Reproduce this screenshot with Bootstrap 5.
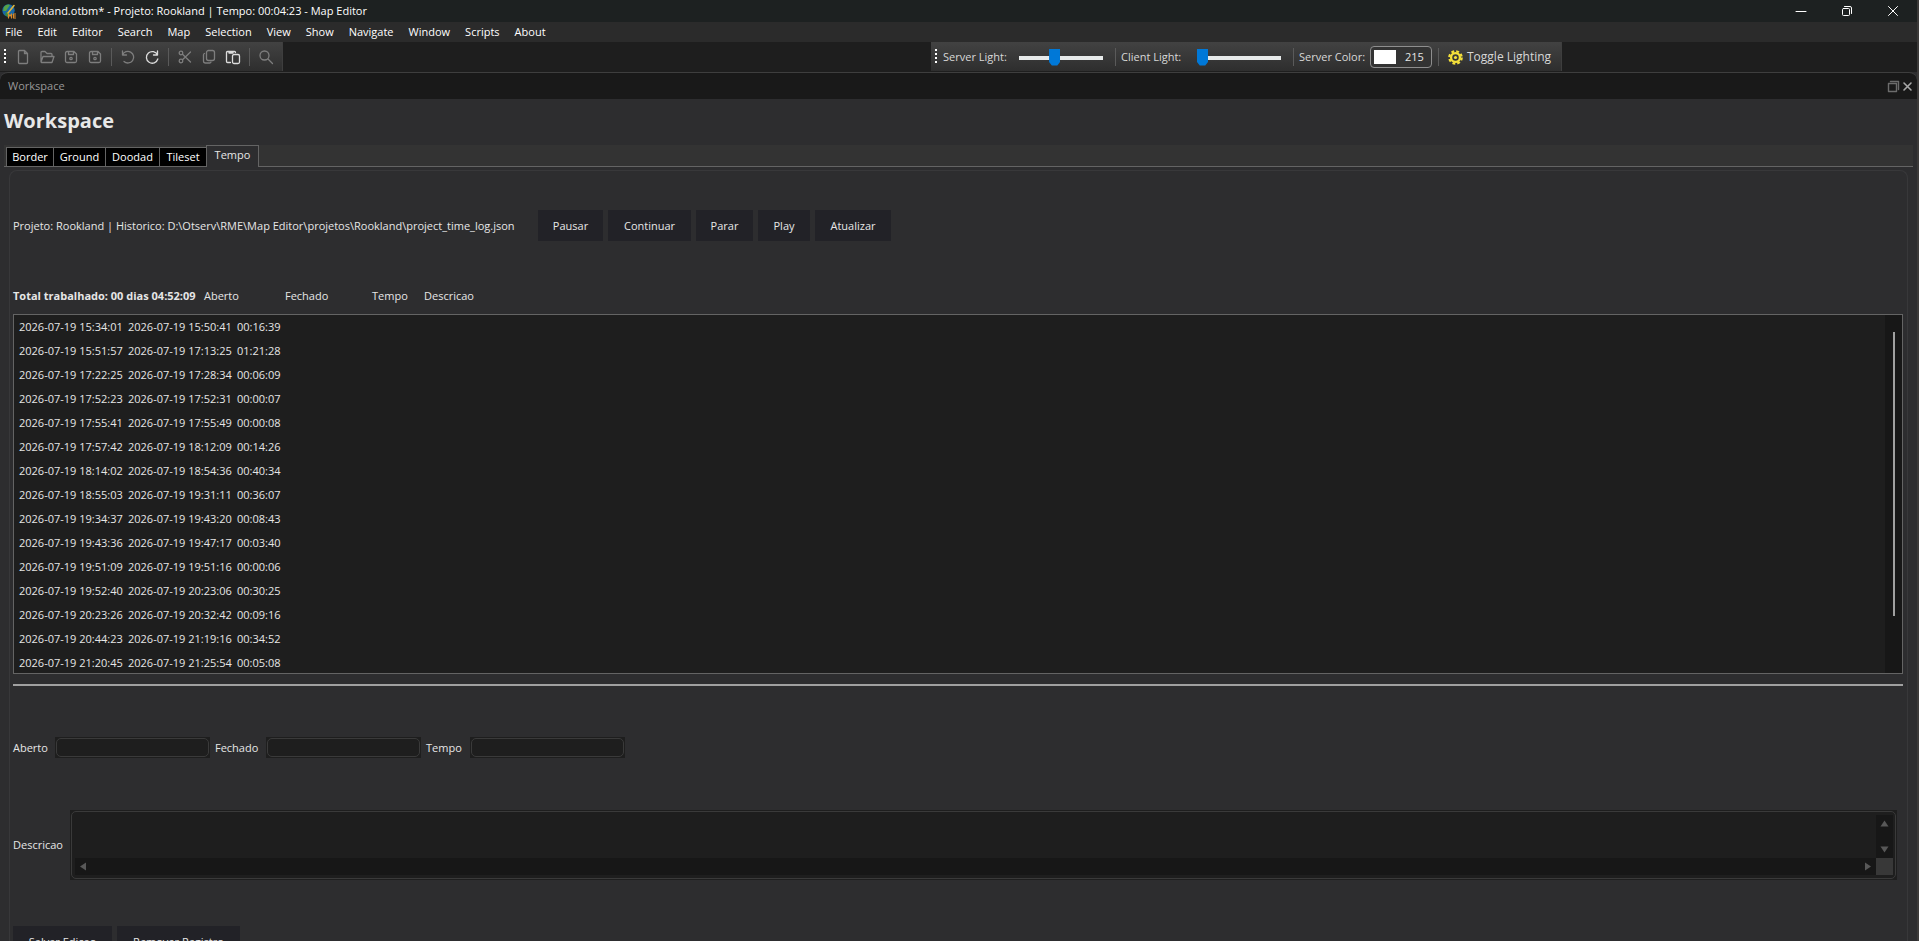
<!DOCTYPE html>
<html lang="pt" data-bs-theme="dark">
<head>
<meta charset="utf-8">
<meta name="viewport" content="width=device-width, initial-scale=1">
<title>rookland.otbm* - Map Editor</title>
<link href="https://cdn.jsdelivr.net/npm/bootstrap@5.3.0/dist/css/bootstrap.min.css" rel="stylesheet">
<script src="https://cdn.jsdelivr.net/npm/bootstrap@5.3.0/dist/js/bootstrap.bundle.min.js" defer></script>
<style>
  body { font-family: "Open Sans", "Liberation Sans", sans-serif; font-size: 11px; line-height: 16px; color: #e6e6e6; background: #2d2d2f; overflow: hidden; }
  svg { display: block; flex: none; fill: none; stroke-linecap: round; stroke-linejoin: round; }
  button { font: inherit; color: inherit; background: none; border: 0; padding: 0; }
  .window { border-right: 2px solid #3c3a39; overflow: hidden; }
  .titlebar { height: 22px; background: #1d2121; color: #fff; padding-left: 2px; padding-right: 18px; }
  .app-name { gap: 6px; }
  .titlebar .caption-buttons { gap: 34px; }
  .menubar { height: 20px; background: #2b2b2b; padding-left: 5px; gap: 15px; }
  .menubar a { color: #fff; text-decoration: none; }
  .toolrow { height: 30px; background: #1e1e1e; }
  .toolbox { height: 29px; background: linear-gradient(#424242, #2e2e2e); border-right: 1px solid #3e3e3e; }
  .grip { width: 2px; height: 15px; background: repeating-linear-gradient(#fff 0 2px, transparent 2px 4px); margin-left: 4px; flex: none; }
  .vsep { width: 1px; height: 18px; background: #5a5a5a; flex: none; }
  .icon-group { padding: 0 8px; gap: 8px; }
  .grip + .icon-group { padding-left: 9px; }
  .icon-group svg { width: 16px; height: 16px; stroke: #7e7e7e; stroke-width: 1.3; }
  .icon-group .live svg { stroke: #dcdcdc; }
  .lights { margin-left: 648px; }
  .lights label { color: #d8d8d8; white-space: nowrap; flex: none; }
  .light-label { width: 76px; margin-left: 5px; }
  .grip + .light-label { margin-left: 6px; }
  .color-label { width: 71px; margin-left: 5px; }
  .slider { appearance: none; -webkit-appearance: none; width: 84px; height: 19px; background: transparent; margin: 2px 12px 0 0; padding: 0; }
  .slider::-webkit-slider-runnable-track { height: 4px; background: #e7eaea; }
  .slider::-webkit-slider-thumb { -webkit-appearance: none; width: 11px; height: 17px; margin-top: -7px; background: #0078d7; border: 0; clip-path: polygon(0 0, 100% 0, 100% 80%, 75% 100%, 25% 100%, 0 80%); }
  .color-pick { width: 62px; height: 22px; border: 1px solid #8e8e8e; border-radius: 4px; background: #333; padding-left: 3px; gap: 9px; margin-right: 6px; }
  .swatch { width: 22px; height: 14px; background: #fff; }
  .toggle-light { font-size: 12px; gap: 4px; padding: 1px 10px 0 9px; color: #d8d8d8; }
  .dock-caption { height: 27px; background: #191919; border-top: 1px solid #3e3e3e; border-radius: 8px 8px 0 0; color: #989898; padding: 0 4px 0 8px; }
  .dock-buttons { gap: 2px; }
  .heading { font-size: 20px; line-height: 26px; font-weight: 700; margin: 9px 4px 11px; color: #e8e8e8; }
  .tabstrip { margin: 0 4px; height: 22px; background: #333; border-bottom: 1px solid #646464; padding-left: 2px; }
  .tabstrip button { background: #000; color: #fff; border: 1px solid #646464; border-bottom: 0; height: 19px; margin-right: -1px; line-height: 18px; }
  .tabstrip .current { background: #2d2d2f; color: #e6e6e6; height: 22px; margin-bottom: -1px; width: 53px; padding-bottom: 4px; }
  .panel { margin: 3px 9px 0; border: 1px solid #38383a; border-bottom: 0; border-radius: 8px 8px 0 0; padding: 39px 4px 0 3px; }
  .flat-btn { background: #222227; height: 31px; color: #e6e6e6; }
  .path-text { width: 520px; white-space: nowrap; }
  .actions { gap: 5px; margin-left: 5px; }
  .log-head { margin-top: 47px; height: 16px; }
  .log-box { margin-top: 10px; border: 1px solid #646464; background: #1e1e1e; height: 360px; overflow: hidden; }
  .log-table { margin-left: 5px; }
  .log-table td { height: 24px; padding: 0; white-space: nowrap; }
  .log-scroll { width: 17px; background: #171717; padding: 17px 7px 0 8px; }
  .log-scroll div { height: 284px; background: #a0a0a0; }
  .rule { height: 2px; background: #a0a0a0; margin-top: 10px; }
  .fields { margin-top: 51px; }
  .well { background: #1e1e1e; padding: 1px; }
  .well .inner { border: 1px solid #3a3a3a; border-radius: 5px; background: #1e1e1e; color: #e6e6e6; outline: 0; }
  .fields input { width: 153px; height: 19px; display: block; padding: 0 4px; }
  .fields .well + label { margin-left: 5px; }
  .desc { margin-top: 52px; margin-right: 6px; }
  .desc-label { width: 57px; }
  .desc-grid { display: grid; grid-template-columns: 1fr 17px; grid-template-rows: 43px 17px; padding: 3px 2px 3px 3px; }
  .desc-grid textarea { background: transparent; border: 0; resize: none; color: inherit; overflow: hidden; outline: 0; padding: 0; width: 100%; height: 43px; }
  .bar { background: #171717; }
  .bar svg { fill: #585858; }
  .corner { background: #383838; }
  .record-actions { gap: 5px; margin-top: 46px; }
</style>
</head>
<body>
<div class="window vh-100 d-flex flex-column">
  <header class="titlebar d-flex align-items-center justify-content-between flex-shrink-0">
    <div class="app-name d-flex align-items-center">
      <svg width="14" height="16" viewBox="0 0 14 16"><circle cx="6.500" cy="7.500" r="6.200" fill="#1769a8"/><path d="M2 4c2-3 5-3 6-2L6 5 4 8 1 8z" fill="#57a345"/><path d="M4 9l3 1-1 4-3-2z" fill="#3e8a3c"/><path d="M6 10L12 2.500" stroke="#e0b33a" stroke-width="1.600"/><path d="M6.500 15v-4l1.500 2 1.500-2v4M13.500 11h-2v4h2M11.500 13h2" stroke="#d98b2b" stroke-width="1.200"/></svg>
      <span>rookland.otbm* - Projeto: Rookland | Tempo: 00:04:23 - Map Editor</span>
    </div>
    <div class="caption-buttons d-flex align-items-center">
      <button aria-label="Minimize"><svg width="12" height="12" viewBox="0 0 12 12" stroke="#fff"><path d="M1 6.500h10"/></svg></button>
      <button aria-label="Restore"><svg width="12" height="12" viewBox="0 0 12 12" stroke="#fff"><rect x="1.500" y="3.500" width="7" height="7" rx="1"/><path d="M3.500 1.500h5.500a1.500 1.500 0 0 1 1.500 1.500v5.500"/></svg></button>
      <button aria-label="Close"><svg width="12" height="12" viewBox="0 0 12 12" stroke="#fff"><path d="M1.500 1.500l9 9M10.500 1.500l-9 9"/></svg></button>
    </div>
  </header>
  <nav class="menubar d-flex align-items-center flex-shrink-0">
    <a href="#">File</a><a href="#">Edit</a><a href="#">Editor</a><a href="#">Search</a><a href="#">Map</a><a href="#">Selection</a><a href="#">View</a><a href="#">Show</a><a href="#">Navigate</a><a href="#">Window</a><a href="#">Scripts</a><a href="#">About</a>
  </nav>
  <div class="toolrow d-flex flex-shrink-0">
    <div class="toolbox d-flex align-items-center">
      <span class="grip"></span>
      <div class="icon-group d-flex">
        <button aria-label="New"><svg viewBox="0 0 16 16"><path d="M9.500 1.500h-5a1 1 0 0 0-1 1v11a1 1 0 0 0 1 1h7a1 1 0 0 0 1-1v-9zM9.500 1.500v3h3"/></svg></button>
        <button aria-label="Open"><svg viewBox="0 0 16 16"><path d="M2 13V3.500a1 1 0 0 1 1-1h3l2 2h4a1 1 0 0 1 1 1v2M2 13l2-5.500h11L13 13.500H2.500"/></svg></button>
        <button aria-label="Save"><svg viewBox="0 0 16 16"><path d="M2.500 4a1.500 1.500 0 0 1 1.500-1.500h7l2.500 2.500v7a1.500 1.500 0 0 1-1.500 1.500h-8a1.500 1.500 0 0 1-1.500-1.500zM5.500 2.500v3h5v-3"/><circle cx="8" cy="9.500" r="1.200"/></svg></button>
        <button aria-label="Save as"><svg viewBox="0 0 16 16"><path d="M2.500 4a1.500 1.500 0 0 1 1.500-1.500h7l2.500 2.500v7a1.500 1.500 0 0 1-1.500 1.500h-8a1.500 1.500 0 0 1-1.500-1.500zM5.500 2.500v3h5v-3"/><circle cx="8" cy="9.500" r="1.200"/></svg></button>
      </div>
      <span class="vsep"></span>
      <div class="icon-group d-flex">
        <button aria-label="Undo"><svg viewBox="0 0 16 16"><path d="M2.500 2v4h4M2.500 6a5.800 5.800 0 1 1 1.500 6.500"/></svg></button>
        <button aria-label="Redo" class="live"><svg viewBox="0 0 16 16"><path d="M13.500 2v4h-4M13.500 6a5.800 5.800 0 1 0 .3 4"/></svg></button>
      </div>
      <span class="vsep"></span>
      <div class="icon-group d-flex">
        <button aria-label="Cut"><svg viewBox="0 0 16 16"><circle cx="4" cy="4" r="1.800"/><circle cx="4" cy="12" r="1.800"/><path d="M5.500 5.200L13.500 13M5.500 10.800L13.500 3"/></svg></button>
        <button aria-label="Copy"><svg viewBox="0 0 16 16"><rect x="5.500" y="1.500" width="8" height="10" rx="2"/><path d="M3.500 4.500a1.500 1.500 0 0 0-1 1.500v6a2 2 0 0 0 2 2h4a1.500 1.500 0 0 0 1.500-1"/></svg></button>
        <button aria-label="Paste" class="live"><svg viewBox="0 0 16 16"><rect x="7.500" y="5.500" width="7" height="9" rx="1.500"/><path d="M5.500 13.500h-3a1 1 0 0 1-1-1v-9a1 1 0 0 1 1-1h7a1 1 0 0 1 1 1M4 2.500v1.500h4V2.500"/></svg></button>
      </div>
      <span class="vsep"></span>
      <div class="icon-group d-flex">
        <button aria-label="Find"><svg viewBox="0 0 16 16"><circle cx="6.500" cy="6.500" r="4.500"/><path d="M10 10l4.500 4.500"/></svg></button>
      </div>
    </div>
    <div class="toolbox lights d-flex align-items-center">
      <span class="grip"></span>
      <label for="server-light" class="light-label">Server Light:</label>
      <input id="server-light" class="slider" type="range" min="0" max="255" value="105">
      <span class="vsep"></span>
      <label for="client-light" class="light-label">Client Light:</label>
      <input id="client-light" class="slider" type="range" min="0" max="255" value="0">
      <span class="vsep"></span>
      <label for="server-color" class="color-label">Server Color:</label>
      <button id="server-color" class="color-pick d-flex align-items-center"><span class="swatch"></span><span>215</span></button>
      <span class="vsep"></span>
      <button class="toggle-light d-flex align-items-center">
        <svg width="15" height="15" viewBox="0 0 16 16"><circle cx="8" cy="8" r="6.600" stroke="#f4e03a" stroke-width="2.400" stroke-dasharray="3 2.180" stroke-linecap="butt"/><circle cx="8" cy="8" r="4.700" stroke="#f4e03a" stroke-width="2.400"/><circle cx="8" cy="8" r="1.700" fill="#f4e03a"/></svg>
        <span>Toggle Lighting</span>
      </button>
    </div>
  </div>
  <div class="dock-caption d-flex align-items-center justify-content-between flex-shrink-0">
    <span>Workspace</span>
    <div class="dock-buttons d-flex align-items-center">
      <button aria-label="Float"><svg width="13" height="13" viewBox="0 0 13 13" stroke="#6c6c6c" stroke-width="1.400"><rect x="1.500" y="3.500" width="8" height="8"/><path d="M3.500 1.500h8v8"/></svg></button>
      <button aria-label="Close panel"><svg width="11" height="11" viewBox="0 0 11 11" stroke="#a8a8a8" stroke-width="1.600"><path d="M2 2l7 7M9 2l-7 7"/></svg></button>
    </div>
  </div>
  <main class="flex-grow-1 d-flex flex-column overflow-hidden">
    <h1 class="heading">Workspace</h1>
    <div class="tabstrip d-flex align-items-end flex-shrink-0" role="tablist">
      <button role="tab" style="width:48px">Border</button><button role="tab" style="width:53px">Ground</button><button role="tab" style="width:55px">Doodad</button><button role="tab" style="width:48px">Tileset</button><button role="tab" class="current">Tempo</button>
    </div>
    <section class="panel flex-grow-1">
      <div class="d-flex align-items-center">
        <span class="path-text">Projeto: Rookland | Historico: D:\Otserv\RME\Map Editor\projetos\Rookland\project_time_log.json</span>
        <div class="actions d-flex">
          <button class="flat-btn" style="width:65px">Pausar</button><button class="flat-btn" style="width:83px">Continuar</button><button class="flat-btn" style="width:57px">Parar</button><button class="flat-btn" style="width:52px">Play</button><button class="flat-btn" style="width:76px">Atualizar</button>
        </div>
      </div>
      <div class="log-head d-flex">
        <b style="width:191px" class="text-nowrap">Total trabalhado: 00 dias 04:52:09</b><span style="width:81px">Aberto</span><span style="width:87px">Fechado</span><span style="width:52px">Tempo</span><span>Descricao</span>
      </div>
      <div class="log-box d-flex justify-content-between">
        <table class="log-table"><colgroup><col style="width:109px"><col style="width:109px"><col style="width:60px"></colgroup><tbody>
          <tr><td>2026-07-19 15:34:01</td><td>2026-07-19 15:50:41</td><td>00:16:39</td></tr>
          <tr><td>2026-07-19 15:51:57</td><td>2026-07-19 17:13:25</td><td>01:21:28</td></tr>
          <tr><td>2026-07-19 17:22:25</td><td>2026-07-19 17:28:34</td><td>00:06:09</td></tr>
          <tr><td>2026-07-19 17:52:23</td><td>2026-07-19 17:52:31</td><td>00:00:07</td></tr>
          <tr><td>2026-07-19 17:55:41</td><td>2026-07-19 17:55:49</td><td>00:00:08</td></tr>
          <tr><td>2026-07-19 17:57:42</td><td>2026-07-19 18:12:09</td><td>00:14:26</td></tr>
          <tr><td>2026-07-19 18:14:02</td><td>2026-07-19 18:54:36</td><td>00:40:34</td></tr>
          <tr><td>2026-07-19 18:55:03</td><td>2026-07-19 19:31:11</td><td>00:36:07</td></tr>
          <tr><td>2026-07-19 19:34:37</td><td>2026-07-19 19:43:20</td><td>00:08:43</td></tr>
          <tr><td>2026-07-19 19:43:36</td><td>2026-07-19 19:47:17</td><td>00:03:40</td></tr>
          <tr><td>2026-07-19 19:51:09</td><td>2026-07-19 19:51:16</td><td>00:00:06</td></tr>
          <tr><td>2026-07-19 19:52:40</td><td>2026-07-19 20:23:06</td><td>00:30:25</td></tr>
          <tr><td>2026-07-19 20:23:26</td><td>2026-07-19 20:32:42</td><td>00:09:16</td></tr>
          <tr><td>2026-07-19 20:44:23</td><td>2026-07-19 21:19:16</td><td>00:34:52</td></tr>
          <tr><td>2026-07-19 21:20:45</td><td>2026-07-19 21:25:54</td><td>00:05:08</td></tr>
        </tbody></table>
        <div class="log-scroll"><div></div></div>
      </div>
      <div class="rule"></div>
      <div class="fields d-flex align-items-center">
        <label for="f-open" style="width:42px">Aberto</label><div class="well"><input id="f-open" class="inner" type="text"></div>
        <label for="f-close" style="width:51px">Fechado</label><div class="well"><input id="f-close" class="inner" type="text"></div>
        <label for="f-time" style="width:44px">Tempo</label><div class="well"><input id="f-time" class="inner" type="text"></div>
      </div>
      <div class="desc d-flex align-items-center">
        <label for="f-desc" class="desc-label">Descricao</label>
        <div class="well flex-grow-1"><div class="inner desc-grid">
          <textarea id="f-desc"></textarea>
          <div class="bar d-flex flex-column align-items-center justify-content-between py-1"><svg width="9" height="9" viewBox="0 0 9 9"><path d="M4.500 1.500L8.500 7.500H.5z"/></svg><svg width="9" height="9" viewBox="0 0 9 9"><path d="M4.500 7.500L8.500 1.500H.5z"/></svg></div>
          <div class="bar d-flex align-items-center justify-content-between px-1"><svg width="9" height="9" viewBox="0 0 9 9"><path d="M1 4.500L7 .5v8z"/></svg><svg width="9" height="9" viewBox="0 0 9 9"><path d="M8 4.500L2 .5v8z"/></svg></div>
          <div class="corner"></div>
        </div></div>
      </div>
      <div class="record-actions d-flex">
        <button class="flat-btn" style="width:99px">Salvar Edicao</button><button class="flat-btn" style="width:123px">Remover Registro</button>
      </div>
    </section>
  </main>
</div>
</body>
</html>
